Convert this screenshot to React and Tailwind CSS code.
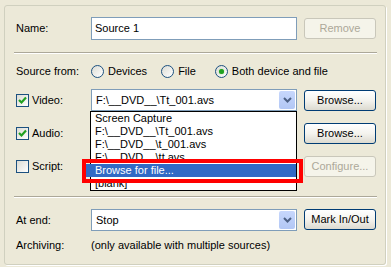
import React from "react";

const FONT = { fontFamily: '"Liberation Sans", Arial, sans-serif' };

function Button({ children, disabled }) {
  return (
    <div
      className={`w-[72px] h-[21px] flex items-center justify-center rounded-[3px] border text-[11px] ${
        disabled
          ? "border-[#c9c7ba] bg-[#f5f4ea] text-[#aca899]"
          : "border-[#003c74] bg-linear-to-b from-white via-[#f4f3ee] to-[#dcdad0] text-black"
      }`}
    >
      {children}
    </div>
  );
}

function Checkbox({ checked }) {
  return (
    <div className="w-[13px] h-[13px] border border-[#1c5180] bg-linear-to-br from-[#dcdcd4] to-white flex items-center justify-center">
      {checked && (
        <svg width="9" height="9" viewBox="0 0 9 9">
          <path d="M1 4 L3.5 6.5 L8 1.5" fill="none" stroke="#21a121" strokeWidth="2.2" />
        </svg>
      )}
    </div>
  );
}

function Radio({ checked, label }) {
  return (
    <div className="flex items-center gap-[4px]">
      <div className="w-[13px] h-[13px] rounded-full border border-[#1c5180] bg-linear-to-br from-[#dcdcd4] to-white flex items-center justify-center">
        {checked && <div className="w-[5px] h-[5px] rounded-full bg-[#21a121] shadow-[0_0_1px_#5ed15e]" />}
      </div>
      <span>{label}</span>
    </div>
  );
}

function Combo({ value, children }) {
  return (
    <div className="relative w-[206px] h-[22px] border border-[#7f9db9] bg-white flex items-center">
      <span className="pl-[4px] flex-1">{value}</span>
      <div className="w-[16px] h-[18px] mr-[1px] rounded-[2px] bg-linear-to-b from-[#c7d7fc] to-[#b2c7f5] flex items-center justify-center">
        <svg width="9" height="6" viewBox="0 0 9 6">
          <path d="M1 1 L4.5 4.5 L8 1" fill="none" stroke="#4d6185" strokeWidth="2" />
        </svg>
      </div>
      {children}
    </div>
  );
}

function Separator() {
  return <div className="ml-[9px] w-[363px] h-[2px] border-t border-[#aca899] border-b border-b-white" />;
}

const LIST = [
  "Screen Capture",
  "F:\\__DVD__\\Tt_001.avs",
  "F:\\__DVD__\\t_001.avs",
  "F:\\__DVD__\\tt.avs",
  "Browse for file...",
  "[blank]",
];

export default function App() {
  return (
    <div
      className="relative w-[391px] h-[267px] bg-[#ece9d8] pt-[5px] pl-[4px] text-[11px] text-black leading-[13px] overflow-hidden"
      style={FONT}
    >
      <div className="w-[382px] h-[260px] border border-[#d0d0bf] rounded-[3px] shadow-[1px_1px_0_#fff]">
        {/* Name */}
        <div className="mt-[11px] h-[23px] flex items-center pl-[11px]">
          <span className="w-[75px]">Name:</span>
          <div className="w-[206px] h-[23px] border border-[#7f9db9] bg-white flex items-center pl-[3px]">
            Source 1
          </div>
          <div className="ml-[7px]">
            <Button disabled>Remove</Button>
          </div>
        </div>

        <div className="mt-[12px]">
          <Separator />
        </div>

        {/* Source from */}
        <div className="mt-[11px] h-[13px] flex items-center pl-[11px]">
          <span className="w-[75px]">Source from:</span>
          <div className="flex items-center gap-[14px]">
            <Radio label="Devices" />
            <Radio label="File" />
            <div className="ml-[5px]">
              <Radio checked label="Both device and file" />
            </div>
          </div>
        </div>

        {/* Video */}
        <div className="mt-[11px] h-[22px] flex items-start pl-[11px]">
          <div className="w-[75px] h-[22px] flex items-center gap-[3px]">
            <Checkbox checked />
            <span>Video:</span>
          </div>
          <Combo value={"F:\\__DVD__\\Tt_001.avs"}>
            <div className="absolute left-[-2px] top-[21px] w-[207px] h-[80px] border border-black bg-white z-10">
              {LIST.map((item, i) => (
                <div
                  key={item}
                  className={`h-[13px] pl-[4px] whitespace-nowrap ${
                    i === 4 ? "bg-[#316ac5] text-white" : ""
                  }`}
                >
                  {item}
                </div>
              ))}
            </div>
          </Combo>
          <div className="ml-[7px] mt-[1px]">
            <Button>Browse...</Button>
          </div>
        </div>

        {/* Audio */}
        <div className="mt-[12px] h-[21px] flex items-center pl-[11px]">
          <div className="w-[75px] flex items-center gap-[3px]">
            <Checkbox checked />
            <span>Audio:</span>
          </div>
          <div className="w-[206px]" />
          <div className="ml-[7px]">
            <Button>Browse...</Button>
          </div>
        </div>

        {/* Script */}
        <div className="mt-[12px] h-[21px] flex items-center pl-[11px]">
          <div className="w-[75px] flex items-center gap-[3px]">
            <Checkbox />
            <span>Script:</span>
          </div>
          <div className="w-[206px]" />
          <div className="ml-[7px]">
            <Button disabled>Configure...</Button>
          </div>
        </div>

        <div className="mt-[19px]">
          <Separator />
        </div>

        {/* At end */}
        <div className="mt-[11px] h-[22px] flex items-center pl-[11px]">
          <span className="w-[75px]">At end:</span>
          <Combo value="Stop" />
          <div className="ml-[7px] -mt-[1px]">
            <Button>Mark In/Out</Button>
          </div>
        </div>

        {/* Archiving */}
        <div className="mt-[8px] h-[13px] flex items-center pl-[11px]">
          <span className="w-[75px]">Archiving:</span>
          <span>(only available with multiple sources)</span>
        </div>
      </div>

      {/* red highlight annotation */}
      <div className="absolute left-[82px] top-[159px] w-[221px] h-[24px] border-4 border-[#ff0000] z-20">
        <div className="absolute left-0 top-[1px] w-[5px] h-[13px] bg-[#316ac5]" />
      </div>
    </div>
  );
}
